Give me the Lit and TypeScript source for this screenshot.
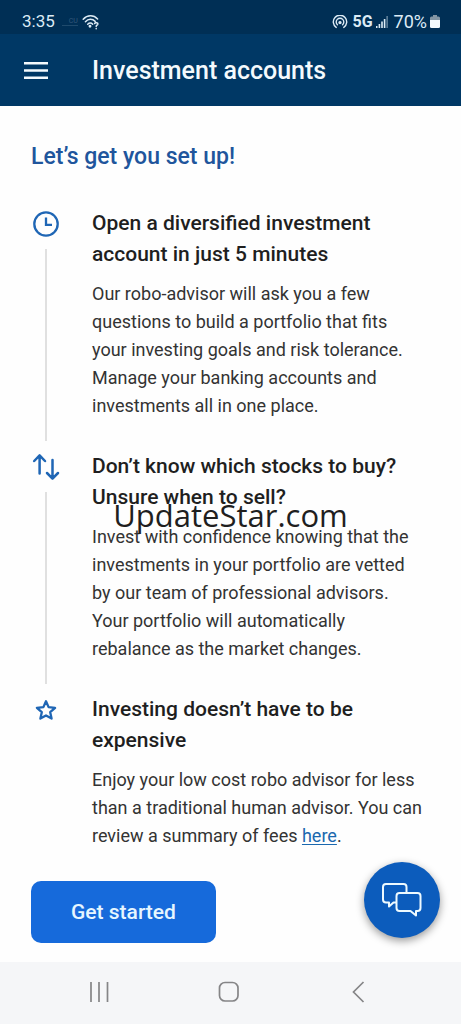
import { LitElement, html, css, svg, TemplateResult } from "lit";
import { customElement, property } from "lit/decorators.js";

const clockIcon = svg`<svg width="28" height="28" viewBox="0 0 28 28" fill="none" stroke="currentColor" stroke-width="2.3" aria-hidden="true">
  <circle cx="14" cy="14" r="11.7"/><path d="M14 7.5v7.3h6"/></svg>`;

const arrowsIcon = svg`<svg width="28" height="28" viewBox="0 0 28 28" fill="none" stroke="currentColor" stroke-width="2.5" stroke-linecap="round" stroke-linejoin="round" aria-hidden="true">
  <path d="M7.6 20.5V2.6M2.2 8l5.4-5.6L13 8M20.5 7v18.4M15 20l5.5 5.6L26 20"/></svg>`;

const starIcon = svg`<svg width="28" height="28" viewBox="0 0 28 28" fill="none" stroke="currentColor" stroke-width="2.3" stroke-linejoin="round" aria-hidden="true">
  <path d="M14 5.2l2.6 5.9 6.5.7-4.9 4.4 1.4 6.4L14 19.4l-5.6 3.2 1.4-6.4-4.9-4.4 6.5-.7z"/></svg>`;

@customElement("setup-step")
class SetupStep extends LitElement {
  @property({ attribute: false }) icon?: TemplateResult<2>;
  @property() heading = "";
  @property({ type: Boolean }) last = false;

  static styles = css`
    :host { display: grid; grid-template-columns: 30px 1fr; column-gap: 31px; }
    .rail { display: flex; flex-direction: column; align-items: center; color: #1f66b5; padding-top: 2px; }
    .rail svg { display: block; flex: none; }
    .line { flex: 1; width: 2px; background: #e0e0e0; margin: 11px 0 10px; }
    .copy { padding-bottom: 31px; }
    .copy.last { padding-bottom: 0; }
    h2 { margin: 0 0 10px; font-size: 21px; line-height: 31px; font-weight: 500; color: #1f1f1f; }
    .body { font-size: 18px; line-height: 28px; color: #333; }
  `;

  render() {
    return html`
      <div class="rail">${this.icon}${this.last ? "" : html`<span class="line"></span>`}</div>
      <div class="copy ${this.last ? "last" : ""}">
        <h2>${this.heading}</h2>
        <div class="body"><slot></slot></div>
      </div>`;
  }
}

@customElement("status-bar")
class StatusBar extends LitElement {
  static styles = css`
    :host { display: flex; align-items: center; justify-content: space-between; height: 34px; padding: 9px 21px 0 22px; box-sizing: border-box; background: #002f55; color: #dcebf5; font-size: 17px; line-height: 25px; }
    .group { display: flex; align-items: center; }
    svg { display: block; }
    .carrier { width: 16px; margin-left: 7px; font-size: 7px; line-height: 8px; text-align: right; color: #33587a; border-bottom: 1px solid #1f4a6c; }
    .wifi { margin-left: 4px; }
    .network { font-size: 16px; font-weight: 700; margin: 0 3px 0 4px; }
    .percent { font-size: 18px; margin: 0 3px 0 6px; }
  `;

  render() {
    return html`
      <div class="group">
        <span>3:35</span>
        <span class="carrier">CU</span>
        <svg class="wifi" width="18" height="16" viewBox="0 0 18 16" fill="none" stroke="currentColor" stroke-width="1.5" stroke-linecap="round" aria-hidden="true">
          <path d="M1.2 5.2c4.2-4.600 10.400-4.600 14.400-.3M3.400 7.800c3-3.200 7-3.200 9.800-.4M5.700 10.200c1.600-1.600 3.600-1.600 5 0"/>
          <circle cx="8" cy="12.2" r=".7" fill="currentColor"/>
          <path d="M12.600 9.600c.4-1.500 3.600-1.200 3.200.6-.3 1.100-1.600 1-1.600 2.200M14.200 14.500v.2"/>
        </svg>
      </div>
      <div class="group">
        <svg width="16" height="14" viewBox="0 0 16 14" fill="none" stroke="currentColor" stroke-width="1.4" stroke-linecap="round" aria-hidden="true">
          <path d="M4.200 12.400a6.700 6.700 0 1 1 7.600 0M5.400 9.800a3.800 3.800 0 1 1 5.200 0"/>
          <circle cx="8" cy="7.600" r="1" fill="currentColor"/>
        </svg>
        <span class="network">5G</span>
        <svg width="12" height="12" viewBox="0 0 12 12" fill="currentColor" aria-hidden="true">
          <path d="M0 10h1.500v2H0zM2.600 8h1.600v4H2.600zM5.200 5.500h1.600V12H5.200zM7.800 3h1.600v9H7.800z"/><path opacity=".4" d="M10.300 0H12v12h-1.700z"/>
        </svg>
        <span class="percent">70%</span>
        <svg width="10" height="13" viewBox="0 0 10 13" aria-hidden="true">
          <path fill="#8295a4" d="M3 0h4v1.500h1.500A1.500 1.500 0 0 1 10 3v2H0V3a1.500 1.500 0 0 1 1.500-1.500H3z"/>
          <path fill="#f3f9fc" d="M0 5h10v6.500A1.500 1.500 0 0 1 8.500 13h-7A1.500 1.500 0 0 1 0 11.500z"/>
        </svg>
      </div>`;
  }
}

@customElement("app-root")
class AppRoot extends LitElement {
  static styles = css`
    :host { display: flex; flex-direction: column; min-height: 100vh; position: relative; background: #fefefe; font-family: Roboto, "Liberation Sans", sans-serif; }
    button { font: inherit; border: 0; padding: 0; background: none; cursor: pointer; }
    svg { display: block; }
    header { display: flex; align-items: center; height: 72px; padding: 2px 24px 0; box-sizing: border-box; background: #003865; color: #f4fafd; }
    .menu { color: inherit; margin-right: 44px; }
    h1 { margin: 0; font-size: 25px; line-height: 32px; font-weight: 500; }
    main { flex: 1; position: relative; padding: 35px 35px 19px 31px; }
    .intro { margin: 0 0 36px; font-size: 23px; line-height: 31px; font-weight: 500; color: #20559c; }
    a { color: #1b68ae; text-decoration: underline; text-underline-offset: 2px; }
    .start { margin-top: 31px; padding: 0 40px; height: 62px; border-radius: 10px; background: #166adb; color: #e6f6ff; font-size: 21px; font-weight: 500; }
    .chat { position: absolute; right: 21px; bottom: 24px; width: 76px; height: 76px; border-radius: 50%; display: grid; place-items: center; background: #0c5cbc; color: #eefaff; box-shadow: 0 3px 8px rgba(0, 0, 0, 0.4); }
    .watermark { position: absolute; left: 0; right: 0; top: 493px; text-align: center; font-family: "Open Sans", "Noto Sans", sans-serif; font-size: 31px; line-height: 44px; color: #1f1f1f; pointer-events: none; }
    nav { display: flex; align-items: center; justify-content: space-between; height: 62px; padding: 0 92px 2px 88px; box-sizing: border-box; background: #f5f6f8; }
    nav button { color: #858587; }
  `;

  render() {
    return html`
      <status-bar></status-bar>
      <header>
        <button class="menu" aria-label="Menu">
          <svg width="24" height="18" viewBox="0 0 24 18" fill="currentColor"><path d="M0 0h24v2.500H0zM0 7.300h24v2.500H0zM0 14.500h24V17H0z"/></svg>
        </button>
        <h1>Investment accounts</h1>
      </header>
      <main>
        <p class="intro">Let’s get you set up!</p>
        <setup-step .icon=${clockIcon} heading="Open a diversified investment account in just 5 minutes">Our robo-advisor will ask you a few questions to build a portfolio that fits your investing goals and risk tolerance. Manage your banking accounts and investments all in one place.</setup-step>
        <setup-step .icon=${arrowsIcon} heading="Don’t know which stocks to buy? Unsure when to sell?">Invest with confidence knowing that the investments in your portfolio are vetted by our team of professional advisors. Your portfolio will automatically rebalance as the market changes.</setup-step>
        <setup-step .icon=${starIcon} heading="Investing doesn’t have to be expensive" last>Enjoy your low cost robo advisor for less than a traditional human advisor. You can review a summary of fees <a href="#fees">here</a>.</setup-step>
        <button class="start">Get started</button>
        <button class="chat" aria-label="Chat">
          <svg width="42" height="36" viewBox="0 0 42 36" fill="none" stroke="currentColor" stroke-width="2" stroke-linejoin="round">
            <path d="M15.500 20.500H12.500L8 24.500V20.500H5A3 3 0 0 1 2 17.500V5A3 3 0 0 1 5 2H22.500A3 3 0 0 1 25.500 5V11"/>
            <path d="M18.500 11H36.500A3 3 0 0 1 39.500 14V26A3 3 0 0 1 36.500 29H35V33.500L29.500 29H18.500A3 3 0 0 1 15.500 26V14A3 3 0 0 1 18.500 11z"/>
          </svg>
        </button>
      </main>
      <nav aria-label="System">
        <button aria-label="Recent apps"><svg width="22" height="22" viewBox="0 0 22 22" fill="none" stroke="currentColor" stroke-width="1.700"><path d="M3 1v20M11 1v20M19.500 1v20"/></svg></button>
        <button aria-label="Home"><svg width="22" height="22" viewBox="0 0 22 22" fill="none" stroke="currentColor" stroke-width="1.700"><rect x="1.500" y="1.500" width="18.500" height="18.500" rx="5.500"/></svg></button>
        <button aria-label="Back"><svg width="22" height="22" viewBox="0 0 22 22" fill="none" stroke="currentColor" stroke-width="1.700"><path d="M16.500 1L6.500 11l10 10"/></svg></button>
      </nav>
      <div class="watermark">UpdateStar.com</div>`;
  }
}
